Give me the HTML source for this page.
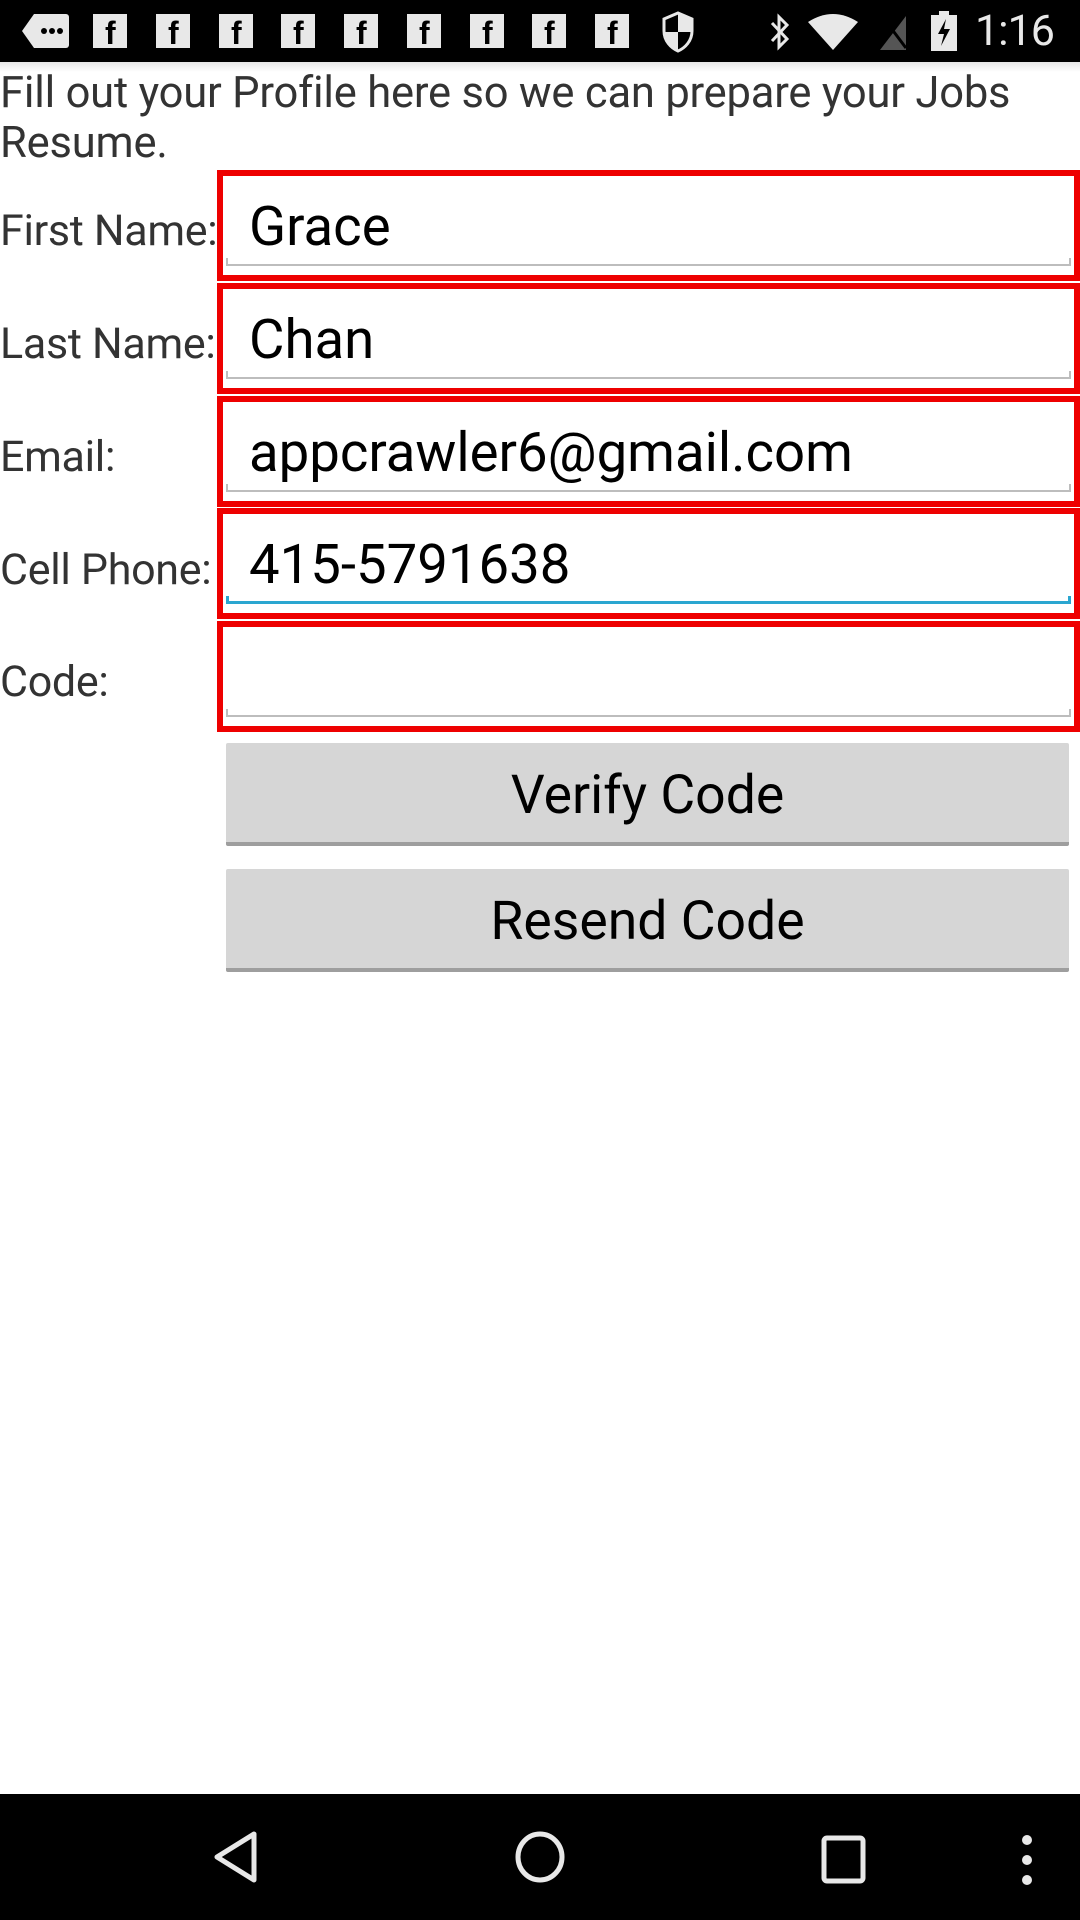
<!DOCTYPE html>
<html><head><meta charset="utf-8">
<style>
*{margin:0;padding:0;box-sizing:border-box}
body{width:1080px;height:1920px;background:#fff;position:relative;overflow:hidden;font-family:"Roboto","Liberation Sans",sans-serif}
.sb{position:absolute;left:0;top:0;width:1080px;height:62px;background:#000}
.shadow{position:absolute;left:0;top:62px;width:1080px;height:10px;background:linear-gradient(#e6e6e6,#fff)}
.fb{position:absolute;top:14px;width:34px;height:34px;background:#e8e8e8}
.fb span{position:absolute;left:12px;bottom:-4px;font:bold 32px "Liberation Sans",sans-serif;color:#000}
.intro{position:absolute;left:0;top:68px;font-size:43.5px;line-height:50px;color:#333;width:1150px;letter-spacing:-0.2px}
.lbl{position:absolute;left:0;font-size:43px;color:#333;letter-spacing:-0.3px}
.box{position:absolute;left:217px;width:863px;height:111px;border:6px solid #e00}
.box .ul{position:absolute;left:3px;right:3px;bottom:9px;height:8px;border:2px solid #bdbdbd;border-top:none}
.box .ul.act{border-color:#2aa6d0;border-width:3px}
.box .v{position:absolute;left:26px;top:19px;font-size:54.5px;color:#000}
.btn{position:absolute;left:226px;width:843px;height:103px;background:#d6d6d6;border-bottom:4px solid #9e9e9e;border-radius:2px;text-align:center;line-height:106px;font-size:53.5px;color:#000}
.nav{position:absolute;left:0;top:1794px;width:1080px;height:126px;background:#000}
</style></head><body>
<div class="sb">
<svg style="position:absolute;left:22px;top:14px" width="48" height="34" viewBox="0 0 48 34"><path d="M12 0H44a3 3 0 0 1 3 3V31a3 3 0 0 1-3 3H12L0 17Z" fill="#e8e8e8"/><circle cx="22" cy="17" r="3" fill="#000"/><circle cx="30" cy="17" r="3" fill="#000"/><circle cx="38" cy="17" r="3" fill="#000"/></svg>
<div class="fb" style="left:93px"><span>f</span></div>
<div class="fb" style="left:156px"><span>f</span></div>
<div class="fb" style="left:219px"><span>f</span></div>
<div class="fb" style="left:281px"><span>f</span></div>
<div class="fb" style="left:344px"><span>f</span></div>
<div class="fb" style="left:407px"><span>f</span></div>
<div class="fb" style="left:470px"><span>f</span></div>
<div class="fb" style="left:532px"><span>f</span></div>
<div class="fb" style="left:595px"><span>f</span></div>
<svg style="position:absolute;left:661px;top:11px" width="34" height="42" viewBox="0 0 34 42"><path d="M17 2L31 8V20C31 30 24 37 17 40C10 37 3 30 3 20V8Z" fill="none" stroke="#e8e8e8" stroke-width="3"/><path d="M17 2V21H31V8ZM17 21V40C10 37 3 30 3 21Z" fill="#e8e8e8"/></svg>
<svg style="position:absolute;left:768px;top:12px" width="24" height="40" viewBox="0 0 24 40"><path d="M4 11L19 27L11 35V5L19 13L4 29" fill="none" stroke="#e8e8e8" stroke-width="3"/></svg>
<svg style="position:absolute;left:808px;top:14px" width="50" height="36" viewBox="0 0 50 36"><path d="M0 8Q25-8 50 8L25 36Z" fill="#e8e8e8"/></svg>
<svg style="position:absolute;left:878px;top:14px" width="30" height="36" viewBox="0 0 30 36"><path d="M2 36L28 2V36Z" fill="#555"/><path d="M4 2L28 34" stroke="#000" stroke-width="3"/></svg>
<svg style="position:absolute;left:930px;top:11px" width="28" height="40" viewBox="0 0 28 40"><rect x="9" y="0" width="10" height="4" fill="#e8e8e8"/><rect x="1" y="4" width="26" height="36" fill="#e8e8e8"/><path d="M16 8L8 23H14L11 35L20 18H14Z" fill="#000"/></svg>
<div style="position:absolute;left:975px;top:6px;font-size:43px;color:#e8e8e8;letter-spacing:-1px">1:16</div>
</div>
<div class="shadow"></div>
<div class="intro">Fill out your Profile here so we can prepare your Jobs<br>Resume.</div>

<div class="lbl" style="top:206px">First Name:</div>
<div class="lbl" style="top:319px">Last Name:</div>
<div class="lbl" style="top:432px">Email:</div>
<div class="lbl" style="top:545px">Cell Phone:</div>
<div class="lbl" style="top:657px">Code:</div>

<div class="box" style="top:170px"><div class="v">Grace</div><div class="ul"></div></div>
<div class="box" style="top:283px"><div class="v">Chan</div><div class="ul"></div></div>
<div class="box" style="top:396px"><div class="v">appcrawler6@gmail.com</div><div class="ul"></div></div>
<div class="box" style="top:508px"><div class="v">415-5791638</div><div class="ul act"></div></div>
<div class="box" style="top:621px"><div class="ul"></div></div>

<div class="btn" style="top:743px">Verify Code</div>
<div class="btn" style="top:869px">Resend Code</div>

<div class="nav">
<svg style="position:absolute;left:212px;top:37px" width="50" height="52" viewBox="0 0 50 52"><path d="M42 3V49L5 26Z" fill="none" stroke="#e8e8e8" stroke-width="5" stroke-linejoin="round"/></svg>
<svg style="position:absolute;left:514px;top:36px" width="52" height="54" viewBox="0 0 52 54"><ellipse cx="26" cy="27" rx="22" ry="23" fill="none" stroke="#e8e8e8" stroke-width="5"/></svg>
<svg style="position:absolute;left:820px;top:40px" width="48" height="52" viewBox="0 0 48 52"><rect x="4" y="4" width="39" height="43" rx="3" fill="none" stroke="#e8e8e8" stroke-width="5"/></svg>
<svg style="position:absolute;left:1019px;top:40px" width="16" height="52" viewBox="0 0 16 52"><circle cx="8" cy="6" r="5" fill="#e8e8e8"/><circle cx="8" cy="26" r="5" fill="#e8e8e8"/><circle cx="8" cy="46" r="5" fill="#e8e8e8"/></svg>
</div>
</body></html>
